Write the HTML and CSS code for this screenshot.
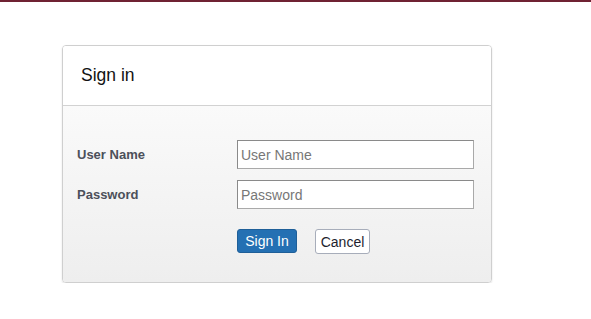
FILE: index.html
```html
<!DOCTYPE html>
<html>
<head>
<meta charset="utf-8">
<link rel="stylesheet" href="styles.css">
</head>
<body>
<div class="topbar"></div>
<div class="page">
  <div class="panel">
    <div class="panel-head">Sign in</div>
    <div class="panel-body">
      <div class="row">
        <label class="lbl">User Name</label>
        <input class="field" type="text" placeholder="User Name">
      </div>
      <div class="row">
        <label class="lbl">Password</label>
        <input class="field" type="password" placeholder="Password">
      </div>
      <div class="actions">
        <button class="btn btn-primary">Sign In</button>
        <button class="btn btn-default">Cancel</button>
      </div>
    </div>
  </div>
</div>
</body>
</html>
```
FILE: styles.css
```css
html, body {
  margin: 0;
  padding: 0;
  background: #ffffff;
  font-family: "Liberation Sans", Arial, sans-serif;
}
.topbar {
  height: 2px;
  background: #6f2232;
}
.page {
  padding: 43px 0 0 62px;
}
.panel {
  width: 428px;
  height: 236px;
  border: 1px solid #cfcfcf;
  border-radius: 4px;
  box-shadow: 0 1px 2px rgba(0,0,0,0.12);
  overflow: hidden;
  display: flex;
  flex-direction: column;
}
.panel-head {
  height: 59px;
  border-bottom: 1px solid #d2d2d2;
  background: #ffffff;
  display: flex;
  align-items: center;
  padding-left: 18px;
  font-size: 17.5px;
  color: #111;
}
.panel-body {
  flex: 1;
  background: linear-gradient(#fafafa, #eeeeee);
  padding: 34px 0 0 14px;
  display: flex;
  flex-direction: column;
  gap: 11px;
}
.row {
  display: flex;
  align-items: center;
}
.lbl {
  width: 160px;
  font-size: 13px;
  font-weight: bold;
  color: #4c505a;
}
.field {
  box-sizing: border-box;
  width: 237px;
  height: 29px;
  margin: 0;
  border: 1px solid #a9a9a9;
  border-top-color: #8a8a8a;
  border-left-color: #8a8a8a;
  background: #fff;
  padding: 0 3px;
  font-family: "Liberation Sans", Arial, sans-serif;
  font-size: 14px;
  color: #333;
}
.field::placeholder {
  color: #777;
}
.actions {
  display: flex;
  gap: 18px;
  margin-left: 160px;
  margin-top: 9px;
}
.btn {
  box-sizing: border-box;
  height: 24px;
  margin: 0;
  border-radius: 3px;
  font-family: "Liberation Sans", Arial, sans-serif;
  font-size: 14px;
  padding: 0;
}
.btn-primary {
  width: 60px;
  background: #2470b3;
  border: 1px solid #1f5f98;
  color: #fff;
}
.btn-default {
  width: 55px;
  height: 25px;
  background: #fff;
  border: 1px solid #a7adba;
  color: #1e1e2e;
}
```
